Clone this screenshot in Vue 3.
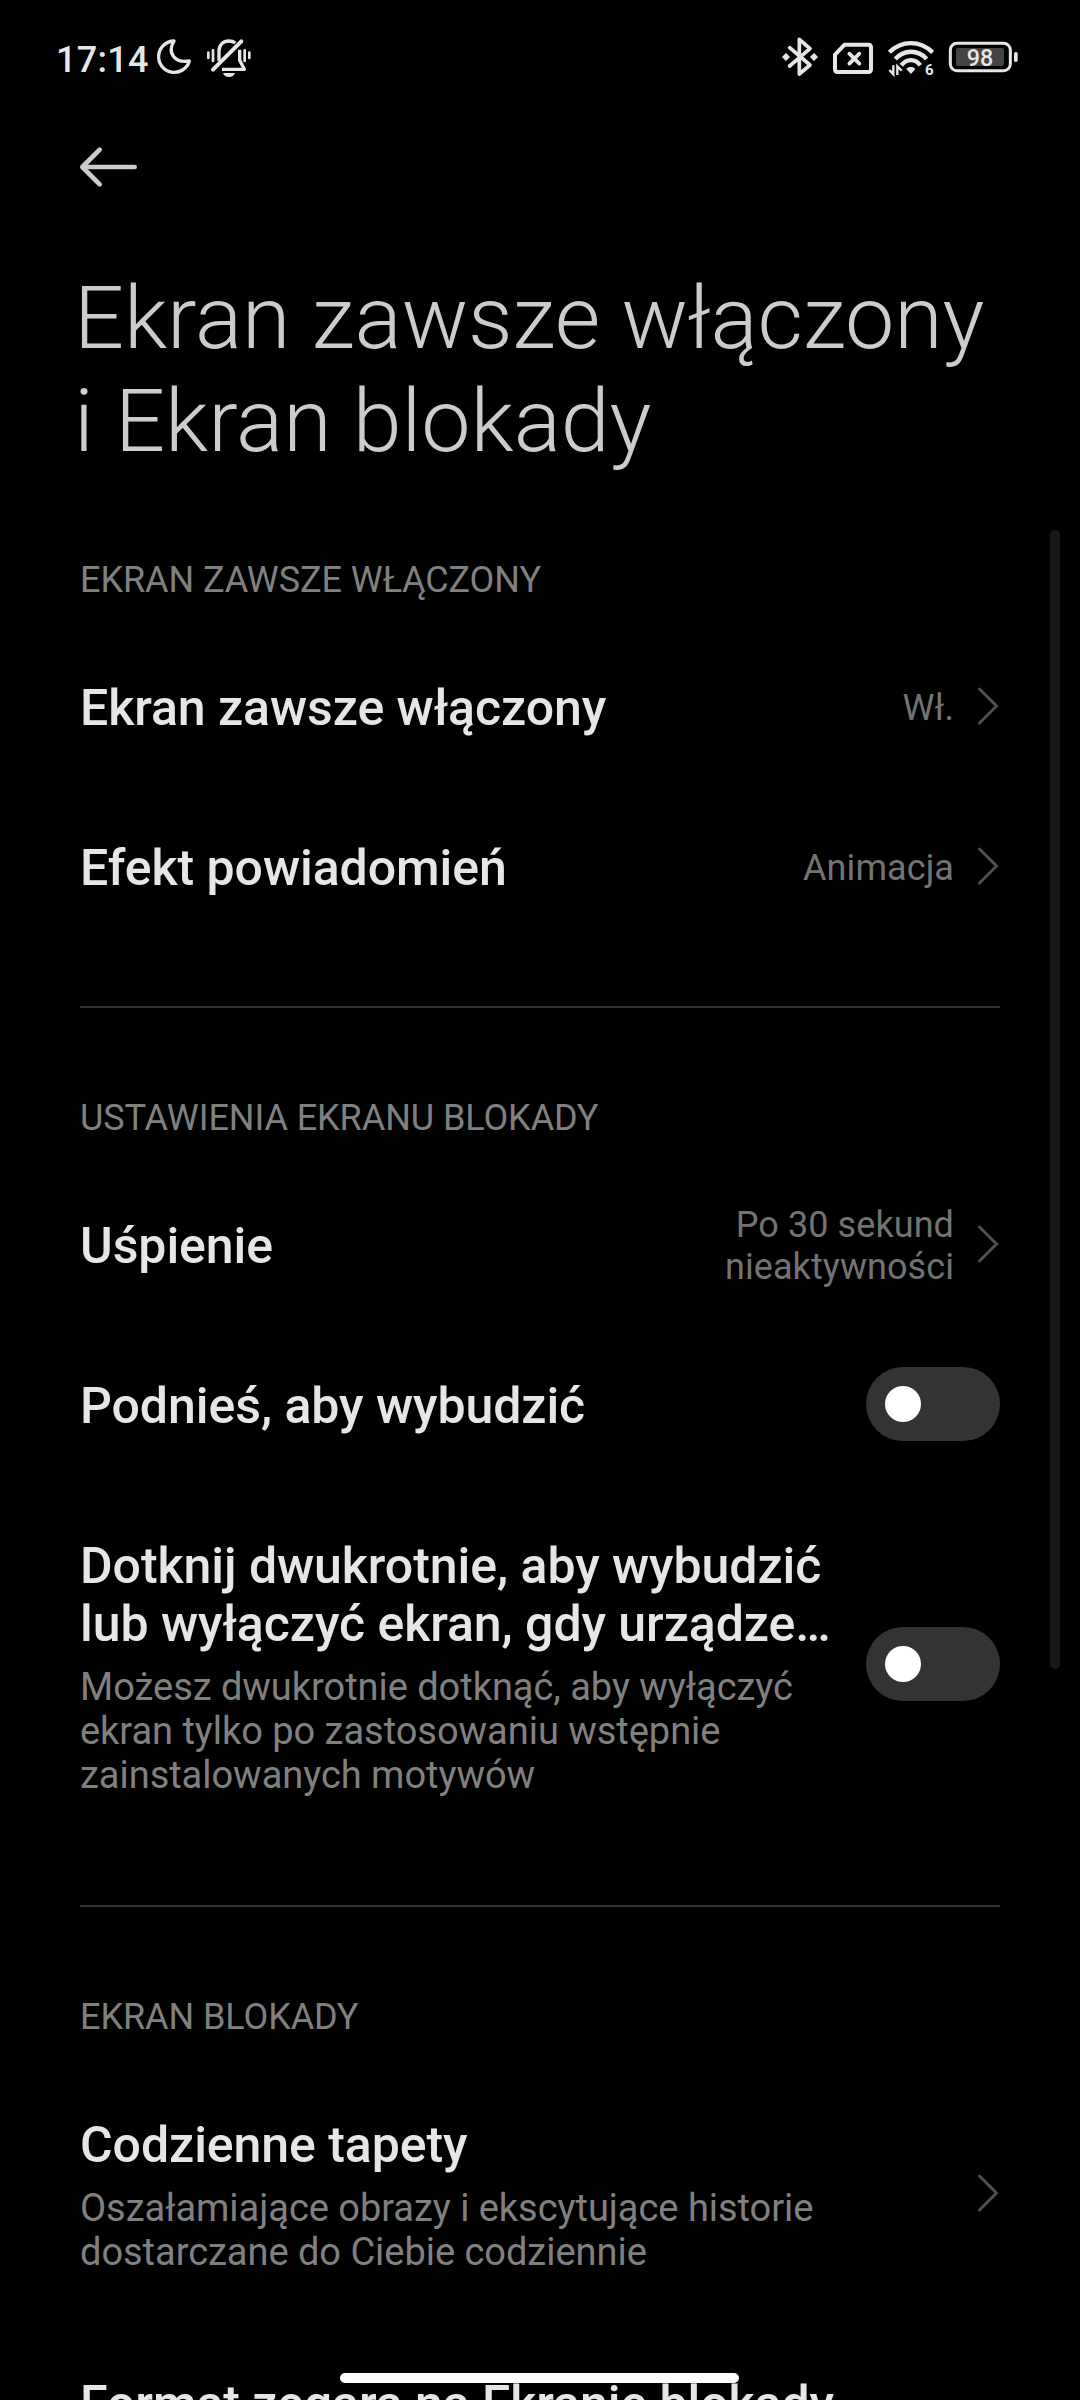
<script setup>
const sections = [
  {
    label: 'EKRAN ZAWSZE WŁĄCZONY',
    rows: [
      { title: 'Ekran zawsze włączony', value: 'Wł.', kind: 'link' },
      { title: 'Efekt powiadomień', value: 'Animacja', kind: 'link' },
    ],
  },
  {
    label: 'USTAWIENIA EKRANU BLOKADY',
    rows: [
      { title: 'Uśpienie', value: 'Po 30 sekund\nnieaktywności', kind: 'link' },
      { title: 'Podnieś, aby wybudzić', kind: 'toggle' },
      {
        title: 'Dotknij dwukrotnie, aby wybudzić\nlub wyłączyć ekran, gdy urządze…',
        note: 'Możesz dwukrotnie dotknąć, aby wyłączyć\nekran tylko po zastosowaniu wstępnie\nzainstalowanych motywów',
        kind: 'toggle',
      },
    ],
  },
  {
    label: 'EKRAN BLOKADY',
    rows: [
      {
        title: 'Codzienne tapety',
        note: 'Oszałamiające obrazy i ekscytujące historie\ndostarczane do Ciebie codziennie',
        kind: 'link',
      },
      { title: 'Format zegara na Ekranie blokady', kind: 'plain' },
    ],
  },
]
</script>

<template>
  <div class="screen">
    <header class="status">
      <div class="status-left">
        <span class="time">17:14</span>
        <svg class="moon" width="36" height="38" viewBox="348 54 108 114">
          <path d="M402 63A47 47 0 1 0 448 123C405 130 380 100 402 63Z" fill="none" stroke="#e6e6e6" stroke-width="10" stroke-linejoin="round" />
        </svg>
        <svg class="bell" width="46" height="40" viewBox="498 53 138 120">
          <g fill="none" stroke="#e6e6e6" stroke-width="10">
            <path d="M537 122V92C537 73 550 62 567 62C574 62 581 64 586 68" />
            <path d="M599 88V120L613 147H546" stroke-linejoin="round" />
            <path d="M604 63L519 148" stroke-width="12" stroke-linecap="round" />
            <path d="M505 97V113M519 90V122M614 90V122M628 97V113" stroke-width="8" stroke-linecap="round" />
          </g>
          <path d="M549 158H585C582 166 576 170 567 170S552 166 549 158Z" fill="#e6e6e6" />
        </svg>
      </div>
      <div class="status-right">
        <svg width="38" height="40" viewBox="63 51 114 120">
          <path d="M89 83L150 135L118 162V58L150 86L89 138" fill="none" stroke="#e6e6e6" stroke-width="11" stroke-linejoin="round" stroke-linecap="round" />
          <path d="M67 111L78 100L89 111L78 122ZM151 111L162 100L173 111L162 122Z" fill="#e6e6e6" stroke="#e6e6e6" stroke-width="2" stroke-linejoin="round" />
        </svg>
        <svg class="sim" width="42" height="40" viewBox="216 51 126 120">
          <path d="M254 74H325Q333 74 333 82V148Q333 156 325 156H233Q225 156 225 148V104Z" fill="none" stroke="#e6e6e6" stroke-width="12" stroke-linejoin="round" />
          <path d="M268 101L298 131M298 101L268 131" stroke="#e6e6e6" stroke-width="11" stroke-linecap="round" />
        </svg>
        <svg class="wifi" width="48" height="44" viewBox="381 51 144 132">
          <g fill="none" stroke="#e6e6e6" stroke-width="13">
            <path d="M388 97C425 60 480 60 518 97" />
            <path d="M406 117C432 88 474 88 500 117" />
            <path d="M424 136C440 115 466 115 481 136" />
          </g>
          <path d="M439 147C446 139 459 139 466 147L453 162Z" fill="#e6e6e6" />
          <path d="M400 136V163L388 150M412 165V139L425 152" fill="none" stroke="#e6e6e6" stroke-width="7" />
          <text x="495" y="165" font-size="45" font-weight="700" fill="#e6e6e6">6</text>
        </svg>
        <svg class="battery" width="72" height="40" viewBox="564 51 216 120">
          <rect x="571" y="70" width="180" height="82" rx="20" fill="none" stroke="#e6e6e6" stroke-width="9" />
          <rect x="588" y="84" width="144" height="54" rx="6" fill="#444" />
          <rect x="762" y="96" width="11" height="30" rx="5" fill="#e6e6e6" />
          <text x="660" y="137.500" font-size="70" font-weight="500" text-anchor="middle" fill="#e6e6e6">98</text>
        </svg>
      </div>
    </header>

    <nav class="toolbar">
      <svg width="60" height="42" viewBox="57 79 180 126">
        <path d="M224 142H67M119 90L67 142L119 194" fill="none" stroke="#ccc" stroke-width="14" stroke-linecap="round" stroke-linejoin="round" />
      </svg>
    </nav>

    <h1>Ekran zawsze włączony<br />i Ekran blokady</h1>

    <main>
      <section v-for="s in sections" :key="s.label">
        <h2>{{ s.label }}</h2>
        <div v-for="r in s.rows" :key="r.title" class="row" :class="{ noted: r.note }">
          <div class="text">
            <div class="title">{{ r.title }}</div>
            <div v-if="r.note" class="note">{{ r.note }}</div>
          </div>
          <div v-if="r.value" class="value">{{ r.value }}</div>
          <svg v-if="r.kind === 'link'" class="chevron" width="24" height="40" viewBox="0 0 24 40">
            <path d="M3.5 3L20.5 20L3.5 37" fill="none" stroke="#505050" stroke-width="3" stroke-linecap="round" />
          </svg>
          <div v-if="r.kind === 'toggle'" class="toggle"><span class="knob"></span></div>
        </div>
      </section>
    </main>

    <div class="scrollbar"></div>
    <div class="home"></div>
  </div>
</template>

<style>
body {
  background: #000;
}
</style>

<style scoped>
.screen {
  position: relative;
  width: 1080px;
  height: 2400px;
  overflow: hidden;
  background: #000;
  color: #e6e6e6;
  font-family: Roboto, "Noto Sans", sans-serif;
}
.screen svg {
  display: block;
  flex: none;
}
.status {
  display: flex;
  justify-content: space-between;
  height: 116px;
  padding: 37px 60px 0 56px;
  box-sizing: border-box;
}
.status-left,
.status-right {
  display: flex;
  align-items: flex-start;
}
.time {
  width: 100px;
  font-size: 36px;
  font-weight: 500;
  line-height: 42px;
  letter-spacing: 0.3px;
  padding-top: 2px;
}
.moon {
  margin-top: 1px;
}
.bell {
  margin: 1px 0 0 14px;
}
.sim {
  margin-left: 13px;
}
.wifi {
  margin-left: 13px;
}
.battery {
  margin-left: 13px;
}
.toolbar {
  height: 150px;
  padding: 30px 0 0 79px;
  box-sizing: border-box;
}
h1 {
  margin: 0 0 0 74px;
  font-size: 88px;
  font-weight: 300;
  line-height: 103px;
  letter-spacing: -0.06px;
  color: #ccc;
  white-space: nowrap;
}
main {
  padding: 0 80px;
}
section {
  padding-bottom: 58px;
}
section + section {
  border-top: 2px solid #333;
}
h2 {
  margin: 0;
  height: 158px;
  padding-top: 89px;
  box-sizing: border-box;
  font-size: 36px;
  font-weight: 400;
  line-height: 42px;
  letter-spacing: -0.07px;
  color: #808080;
  white-space: nowrap;
}
section:first-child h2 {
  height: 156px;
  padding-top: 87px;
}
.row {
  display: flex;
  align-items: center;
  padding: 51px 0;
}
.row.noted {
  padding-bottom: 50px;
}
.text {
  flex: 1;
}
.title {
  font-size: 50px;
  font-weight: 500;
  line-height: 58px;
  letter-spacing: -0.05px;
  white-space: pre;
}
.note {
  padding-top: 12px;
  font-size: 38px;
  line-height: 44px;
  letter-spacing: -0.03px;
  color: #808080;
  white-space: pre;
}
.value {
  margin: -30px 22px -30px 0;
  font-size: 36px;
  line-height: 42px;
  letter-spacing: 0.08px;
  text-align: right;
  color: #737373;
  white-space: pre;
}
.chevron {
  margin: -2px 0 2px;
}
.toggle {
  display: flex;
  align-items: center;
  width: 134px;
  height: 74px;
  margin: -12px 0 -8px;
  padding-left: 19px;
  box-sizing: border-box;
  border-radius: 37px;
  background: #333;
}
.noted .toggle {
  margin: -14px 0 -8px;
}
.knob {
  width: 36px;
  height: 36px;
  border-radius: 50%;
  background: #fff;
}
.scrollbar {
  position: absolute;
  left: 1050px;
  top: 530px;
  width: 10px;
  height: 1139px;
  border-radius: 5px;
  background: #181818;
}
.home {
  position: absolute;
  left: 340px;
  top: 2373px;
  width: 399px;
  height: 10px;
  border-radius: 5px;
  background: #fff;
}
</style>
